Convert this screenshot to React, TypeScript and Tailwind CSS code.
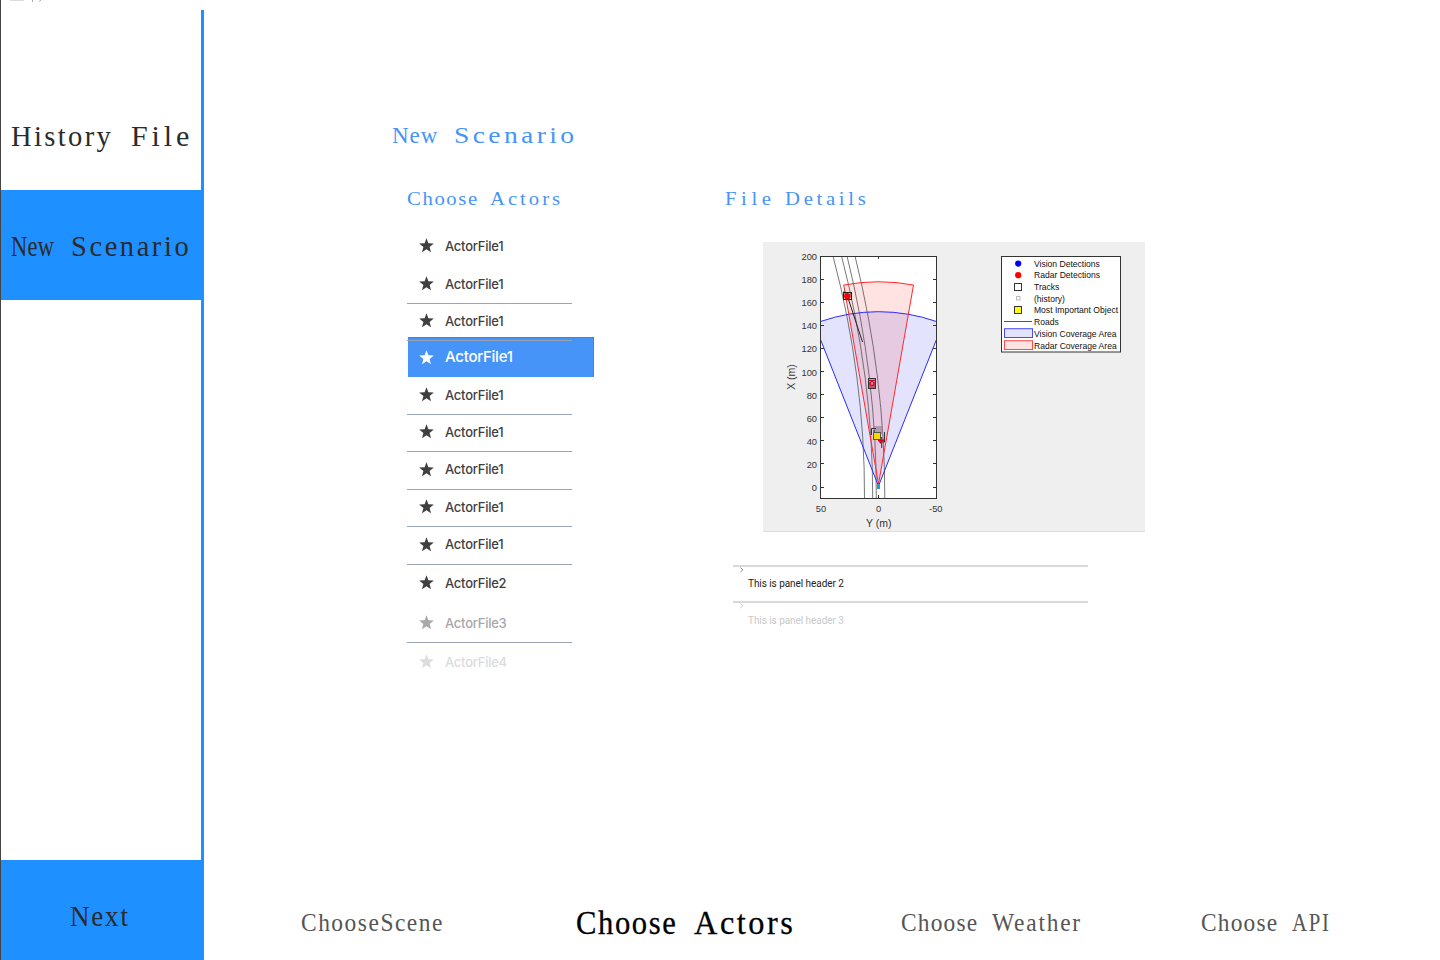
import React from "react";

type Word = { text: string; className: string; box?: string };

function Words({ words, className }: { words: Word[]; className: string }) {
  return (
    <div className={`flex whitespace-pre font-['Liberation_Serif',serif] ${className}`}>
      {words.map((w, i) => (
        <span key={i} className={`block shrink-0 ${w.box ?? ""}`}>
          <span className={`inline-block origin-left ${w.className}`}>
            {w.text + (i < words.length - 1 ? " " : "")}
          </span>
        </span>
      ))}
    </div>
  );
}

function Star() {
  return (
    <svg width="15" height="15" viewBox="0 0 15 15" className="-mt-0.5 shrink-0" fill="currentColor">
      <path d="M7.5 0.2L9.4 5.3L14.8 5.6L10.6 8.9L12 14.2L7.5 11.3L3 14.2L4.4 8.9L0.2 5.6L5.6 5.3Z" />
    </svg>
  );
}

const line = "relative z-10 w-[165px] border-b border-[#9aa3b5]";

const rows = [
  { name: "ActorFile1", row: "h-[37px] w-[165px]", text: "text-[13px] text-[#3f3f3f]" },
  { name: "ActorFile1", row: `h-[39px] ${line}`, text: "text-[13px] text-[#3f3f3f] pt-px" },
  { name: "ActorFile1", row: `h-[37px] ${line}`, text: "text-[13px] text-[#3f3f3f] pb-px" },
  {
    name: "ActorFile1",
    row: "-mt-1 ml-px h-[40px] w-[186px] border-t border-r border-[#5479e4] bg-[#4794f9]",
    text: "pt-px text-[15px] text-white -ml-px",
  },
  { name: "ActorFile1", row: `h-[38px] ${line}`, text: "text-[13px] text-[#3f3f3f]" },
  { name: "ActorFile1", row: `h-[37px] ${line}`, text: "text-[13px] text-[#3f3f3f] pb-px" },
  { name: "ActorFile1", row: `h-[38px] ${line}`, text: "text-[13px] text-[#3f3f3f] pb-px" },
  { name: "ActorFile1", row: `h-[37px] ${line}`, text: "text-[13px] text-[#3f3f3f] pb-px" },
  { name: "ActorFile1", row: `h-[38px] ${line}`, text: "text-[13px] text-[#3f3f3f] pb-px" },
  { name: "ActorFile2", row: "h-[37px] w-[165px]", text: "text-[13px] text-[#3f3f3f]" },
  { name: "ActorFile3", row: `h-[41px] ${line}`, text: "text-[13px] text-[#a8a8a8] pt-[3px]" },
  { name: "ActorFile4", row: "h-[39px] w-[165px]", text: "text-[13px] text-[#dcdcdc]" },
];

const yTicks = [200, 180, 160, 140, 120, 100, 80, 60, 40, 20, 0];

const legend = [
  "Vision Detections",
  "Radar Detections",
  "Tracks",
  "(history)",
  "Most Important Object",
  "Roads",
  "Vision Coverage Area",
  "Radar Coverage Area",
];

function Chart() {
  return (
    <svg
      width="382"
      height="290"
      viewBox="763 242 382 290"
      className="block bg-[#efefef] font-['Liberation_Sans',sans-serif]"
    >
      <defs>
        <clipPath id="plot">
          <rect x="821" y="257" width="115" height="241" />
        </clipPath>
      </defs>
      <path d="M763 531.5H1145" stroke="#dadde1" />
      <rect x="820.5" y="256.5" width="116" height="242" fill="#fff" />
      <g clipPath="url(#plot)">
        <path d="M878.5 486L820.5 339.5V321.5Q849 311.7 878.5 311.7T936.5 321.5V339.5Z" fill="#e3e3fe" />
        <path d="M878.5 484L843.7 285Q878.5 278.5 913.5 285Z" fill="#ff0000" fillOpacity="0.11" />
        <g fill="none" stroke="#555" strokeWidth="0.8">
          <path d="M833 256Q865 377 864.5 498" />
          <path d="M841.5 256Q873 377 872.7 498" />
          <path d="M847 256Q877 377 876.3 498" />
          <path d="M855 256Q885 377 884.8 498" />
        </g>
        <path
          d="M820.5 321.5Q849 311.7 878.5 311.7T936.5 321.5M820.5 339.5L878.5 486L936.5 339.5"
          fill="none"
          stroke="#2a2aff"
        />
        <path d="M878.5 484L843.7 285Q878.5 278.5 913.5 285Z" fill="none" stroke="#ff2a2a" />
        <path d="M848 298L862.5 342" stroke="#222" />
        <path d="M844 291L849 300" stroke="#678b45" strokeWidth="2" />
        <rect x="843.5" y="292.5" width="8" height="7" fill="none" stroke="#222" />
        <circle cx="847.3" cy="296.3" r="3.2" fill="#f00" />
        <rect x="868.5" y="378.5" width="7" height="10" fill="#c98fa8" stroke="#333" />
        <path d="M869 380.5H875M869 387H875M870 382V386M874 382V386" stroke="#c0142c" />
        <circle cx="872" cy="383.5" r="2" fill="none" stroke="#e00020" strokeWidth="1.2" />
        <rect x="874" y="426" width="9" height="8" fill="#998095" opacity="0.65" />
        <path d="M871.5 435V428.5H876M874 430V434M884.5 432V442H879M881.7 437V448" fill="none" stroke="#333" />
        <path d="M878 440.5H884M880 442.5H882" stroke="#e00020" strokeWidth="2" />
        <rect x="873.5" y="432.5" width="7" height="7" fill="#f5db00" stroke="#555" />
        <rect x="877" y="484" width="3" height="5" fill="#249ad5" />
      </g>
      <rect x="820.5" y="256.5" width="116" height="242" fill="none" stroke="#333" />
      <path d="M878.5 256V259M878.5 495V498" stroke="#333" />
      <g fontSize="9.3" fill="#333">
        {yTicks.map((t, i) => {
          const y = 256.5 + i * 23.1;
          return (
            <React.Fragment key={t}>
              <path d={`M821 ${Math.round(y) - 0.5}h3M936 ${Math.round(y) - 0.5}h-3`} stroke="#333" />
              <text x="817" y={y + 3.5} textAnchor="end">{t}</text>
            </React.Fragment>
          );
        })}
        <text x="821" y="512" textAnchor="middle">50</text>
        <text x="878.5" y="512" textAnchor="middle">0</text>
        <text x="935.8" y="512" textAnchor="middle">-50</text>
      </g>
      <g fontSize="10.5" fill="#333">
        <text x="878.8" y="526.5" textAnchor="middle">Y (m)</text>
        <text transform="translate(795 377) rotate(-90)" textAnchor="middle">X (m)</text>
      </g>
      <rect x="1001.5" y="256.5" width="119" height="95.5" fill="#fff" stroke="#333" />
      <g fontSize="8.55" fill="#111">
        {legend.map((t, i) => (
          <text key={t} x="1034" y={266.6 + i * 11.7}>{t}</text>
        ))}
      </g>
      <circle cx="1018.2" cy="263.6" r="3.1" fill="#00f" />
      <circle cx="1018.2" cy="275.2" r="3.1" fill="#f00" />
      <rect x="1014.5" y="283.5" width="7" height="7" fill="#fff" stroke="#333" />
      <rect x="1016.5" y="296.5" width="3.5" height="3.5" fill="#fff" stroke="#bbb" />
      <rect x="1014.5" y="306.5" width="7" height="7" fill="#ff0" stroke="#333" />
      <path d="M1004 321.5H1032" stroke="#555" />
      <rect x="1004.5" y="328.7" width="28" height="8.8" fill="#e3e3fe" stroke="#4a4aff" />
      <rect x="1004.5" y="340.7" width="28" height="8.8" fill="#fee3e3" stroke="#ff4a4a" />
    </svg>
  );
}

function Panel({ label, faded }: { label: string; faded?: boolean }) {
  return (
    <div className="h-9 w-[355px] border-t-2 border-[#d9d9d9]">
      <svg width="4" height="6" viewBox="0 0 4 6" className="ml-[7px] block">
        <path d="M0.5 0.5L2.8 2.8L0.5 5" fill="none" stroke={faded ? "#ccc" : "#888"} strokeWidth="1" />
      </svg>
      <div
        className={`ml-[15px] font-['Roboto',sans-serif] text-[10px] leading-3 tracking-[-0.06px] ${
          faded ? "pt-[6px] text-[#c9c9c9]" : "pt-[5px] text-[#222]"
        }`}
      >
        {label}
      </div>
    </div>
  );
}

export default function App() {
  return (
    <div className="flex h-[960px] w-[1440px] overflow-hidden bg-white">
      <aside className="flex w-[204px] shrink-0 flex-col border-l border-[#444]">
        <div className="h-[10px]">
          <svg width="50" height="3" viewBox="0 0 50 3" className="block">
            <path d="M9 0H23" stroke="#ddd" strokeWidth="2" />
            <path d="M31.5 0V2M38 1.5L40 0" stroke="#aaa" fill="none" />
          </svg>
        </div>
        <nav className="flex flex-1 flex-col border-r-[3px] border-[#1e90ff] text-[#2b2b2b]">
          <div className="flex h-[180px] items-end pb-[36px] pl-[10px]">
            <Words
              className="text-[30px] leading-9"
              words={[
                { text: "History", box: "w-[120px]", className: "scale-x-95 tracking-[2.5px]" },
                { text: "File", className: "tracking-[3.9px]" },
              ]}
            />
          </div>
          <div className="flex h-[110px] items-center bg-[#1e90ff] pt-[2px] pl-[10px]">
            <Words
              className="text-[30px] leading-9"
              words={[
                { text: "New", box: "w-[60px]", className: "scale-x-75 tracking-[0.3px]" },
                { text: "Scenario", className: "scale-x-95 tracking-[2.7px]" },
              ]}
            />
          </div>
          <div className="flex-1" />
          <div className="flex h-[100px] items-center bg-[#1e90ff] pt-[12px] pl-[69px]">
            <Words
              className="text-[30px] leading-9"
              words={[{ text: "Next", className: "scale-x-90 tracking-[2px]" }]}
            />
          </div>
        </nav>
      </aside>
      <main className="flex flex-1 flex-col">
        <h1 className="ml-[188px] mt-[120px] h-[62px] text-[#4794f9]">
          <Words
            className="text-[23px] leading-[32px]"
            words={[
              { text: "New", box: "w-[61.5px]", className: "tracking-[1px]" },
              { text: "Scenario", className: "scale-x-[1.2] tracking-[2.8px]" },
            ]}
          />
        </h1>
        <div className="flex h-[700px]">
          <section className="ml-[203px] w-[318px]">
            <h2 className="h-[46px] text-[#4794f9]">
              <Words
                className="text-[18px] leading-[35px]"
                words={[
                  { text: "Choose", box: "w-[83px]", className: "scale-x-[1.15] tracking-[1.4px]" },
                  { text: "Actors", className: "scale-x-[1.15] tracking-[2.6px]" },
                ]}
              />
            </h2>
            <ul>
              {rows.map((r, i) => (
                <li
                  key={i}
                  className={`flex items-center pl-3 font-['Inter',sans-serif] font-medium tracking-[-0.25px] ${r.row}`}
                >
                  <div className={`flex items-center gap-[11px] leading-4 ${r.text}`}>
                    <Star />
                    <span className="-mt-0.5">{r.name}</span>
                  </div>
                </li>
              ))}
            </ul>
          </section>
          <section>
            <h2 className="h-[60px] text-[#4794f9]">
              <Words
                className="text-[18px] leading-[35px]"
                words={[
                  { text: "File", box: "w-[59.5px]", className: "scale-x-[1.15] tracking-[4px]" },
                  { text: "Details", className: "scale-x-[1.15] tracking-[3.2px]" },
                ]}
              />
            </h2>
            <div className="ml-[38px]">
              <Chart />
            </div>
            <div className="mt-[33px] ml-2">
              <Panel label="This is panel header 2" />
              <Panel label="This is panel header 3" faded />
            </div>
          </section>
        </div>
        <footer className="flex h-[78px] items-center pt-[4px] pl-[97px] text-[#555]">
          <div className="w-[275px]">
            <Words
              className="text-[26px] leading-9"
              words={[{ text: "ChooseScene", className: "scale-x-90 tracking-[1.7px]" }]}
            />
          </div>
          <div className="w-[325px] text-black">
            <Words
              className="text-[34px] leading-9 [-webkit-text-stroke:0.3px_black]"
              words={[
                { text: "Choose", box: "w-[118px]", className: "scale-x-90 tracking-[1.8px]" },
                { text: "Actors", className: "scale-x-95 tracking-[2.7px]" },
              ]}
            />
          </div>
          <div className="w-[300px]">
            <Words
              className="text-[26px] leading-9"
              words={[
                { text: "Choose", box: "w-[91px]", className: "scale-x-90 tracking-[1.3px]" },
                { text: "Weather", className: "scale-x-90 tracking-[2px]" },
              ]}
            />
          </div>
          <div className="w-[200px]">
            <Words
              className="text-[26px] leading-9"
              words={[
                { text: "Choose", box: "w-[91px]", className: "scale-x-90 tracking-[1.3px]" },
                { text: "API", className: "scale-x-[0.8] tracking-[2.1px]" },
              ]}
            />
          </div>
        </footer>
      </main>
    </div>
  );
}
